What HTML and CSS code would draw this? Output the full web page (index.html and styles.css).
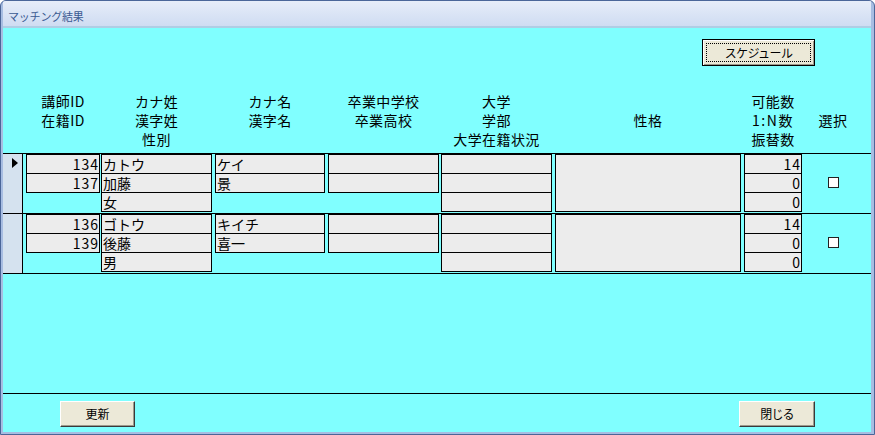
FILE: index.html
```html
<!DOCTYPE html>
<html lang="ja">
<head>
<meta charset="utf-8">
<title>マッチング結果</title>
<link rel="stylesheet" href="styles.css">
</head>
<body>
<div class="window">
  <div class="titlebar">マッチング結果</div>
  <div class="client">
    <div class="toolbar">
      <button class="btn btn-default btn-schedule">スケジュール<span class="focus"></span></button>
    </div>

    <div class="cols header">
      <div class="sel-space"></div>
      <div class="c c-id"><div>講師ID</div><div>在籍ID</div></div>
      <div class="c c-kana"><div>カナ姓</div><div>漢字姓</div><div>性別</div></div>
      <div class="c c-name"><div>カナ名</div><div>漢字名</div></div>
      <div class="c c-school"><div>卒業中学校</div><div>卒業高校</div></div>
      <div class="c c-univ"><div>大学</div><div>学部</div><div>大学在籍状況</div></div>
      <div class="c c-char mid"><div>性格</div></div>
      <div class="c c-num"><div>可能数</div><div class="wide">1:N数</div><div>振替数</div></div>
      <div class="c c-check mid"><div>選択</div></div>
    </div>

    <div class="records">
      <div class="cols record">
        <div class="sel"><span class="arrow"></span></div>
        <div class="c c-id"><div class="box num">134</div><div class="box num">137</div></div>
        <div class="c c-kana"><div class="box">カトウ</div><div class="box">加藤</div><div class="box">女</div></div>
        <div class="c c-name"><div class="box">ケイ</div><div class="box">景</div></div>
        <div class="c c-school"><div class="box"></div><div class="box"></div></div>
        <div class="c c-univ"><div class="box"></div><div class="box"></div><div class="box"></div></div>
        <div class="c c-char"><div class="box tall"></div></div>
        <div class="c c-num"><div class="box num">14</div><div class="box num">0</div><div class="box num">0</div></div>
        <div class="c c-check"><span class="checkbox"></span></div>
      </div>
      <div class="cols record">
        <div class="sel"></div>
        <div class="c c-id"><div class="box num">136</div><div class="box num">139</div></div>
        <div class="c c-kana"><div class="box">ゴトウ</div><div class="box">後藤</div><div class="box">男</div></div>
        <div class="c c-name"><div class="box">キイチ</div><div class="box">喜一</div></div>
        <div class="c c-school"><div class="box"></div><div class="box"></div></div>
        <div class="c c-univ"><div class="box"></div><div class="box"></div><div class="box"></div></div>
        <div class="c c-char"><div class="box tall"></div></div>
        <div class="c c-num"><div class="box num">14</div><div class="box num">0</div><div class="box num">0</div></div>
        <div class="c c-check"><span class="checkbox"></span></div>
      </div>
    </div>

    <div class="footer">
      <button class="btn btn-update">更新</button>
      <button class="btn btn-close">閉じる</button>
    </div>
  </div>
</div>
</body>
</html>
```

FILE: styles.css
```css
* { box-sizing: border-box; }

body {
  margin: 0;
  font-family: "Noto Sans CJK JP", "Noto Sans", sans-serif;
  color: #000;
}

.window {
  width: 875px;
  height: 435px;
  border: 1px solid #4a6699;
  border-radius: 6px 6px 0 0;
  background: #a7bde2;
  padding: 0 3px 2px 2px;
  display: flex;
  flex-direction: column;
  overflow: hidden;
}

.titlebar {
  height: 27px;
  padding: 5px 0 0 5px;
  font-size: 11px;
  line-height: 20px;
  letter-spacing: -0.2px;
  color: #3a5a92;
  background: linear-gradient(#e6edf9, #cfdcf2);
  border-bottom: 2px solid #afcde4;
}

.client {
  flex: 1;
  background: #80ffff;
  display: flex;
  flex-direction: column;
}

.toolbar {
  display: flex;
  justify-content: flex-end;
  padding: 11px 56px 0 0;
}

.btn {
  font-family: "Noto Sans CJK JP", "Noto Sans", sans-serif;
  font-size: 12px;
  line-height: 14px;
  color: #000;
  background: #ece9d8;
  border: 1px solid;
  border-color: #ffffff #3a3a3a #3a3a3a #ffffff;
  box-shadow: inset -1px -1px 0 #9d9a8c;
  padding: 0;
  height: 26px;
}

.btn-default {
  position: relative;
  border: 1px solid #000;
  box-shadow: inset 1px 1px 0 #ffffff, inset -1px -1px 0 #9d9a8c;
  letter-spacing: -0.6px;
}

.btn-schedule { width: 113px; height: 27px; }
.btn-update { width: 75px; }
.btn-close { width: 76px; letter-spacing: -0.8px; }

.focus {
  position: absolute;
  left: 3px;
  top: 3px;
  right: 3px;
  bottom: 3px;
  border: 1px dotted #000;
}

.cols { display: flex; }

.header {
  margin-top: 26px;
  height: 57px;
}

.header .c {
  display: flex;
  flex-direction: column;
  align-items: center;
  font-size: 14px;
  line-height: 19px;
  letter-spacing: 0.4px;
  white-space: nowrap;
}

.header .mid { justify-content: center; }
.header .wide { letter-spacing: 1.6px; }

.sel-space { width: 20px; flex: none; }

.c { flex: none; }
.c-id { margin-left: 3px; width: 74px; }
.c-kana { margin-left: 1px; width: 111px; }
.c-name { margin-left: 3px; width: 110px; }
.c-school { margin-left: 3px; width: 111px; }
.c-univ { margin-left: 2px; width: 111px; }
.c-char { margin-left: 3px; width: 186px; }
.c-num { margin-left: 3px; width: 58px; }
.c-check { width: 62px; }

.records {
  margin-top: 4px;
  border-top: 1px solid #000;
}

.record {
  height: 60px;
  border-bottom: 1px solid #000;
}

.sel {
  width: 20px;
  flex: none;
  border-right: 1px solid #000;
  background: #d5e2ef;
  padding: 4px 0 0 9px;
}

.arrow {
  display: block;
  width: 0;
  height: 0;
  border-left: 6px solid #000;
  border-top: 5px solid transparent;
  border-bottom: 5px solid transparent;
}

.box {
  height: 20px;
  border: 1px solid #000;
  background: #ececec;
  font-size: 14px;
  line-height: 18px;
  padding: 0 1px;
  white-space: nowrap;
  overflow: hidden;
}

.box + .box { margin-top: -1px; }
.box.tall { height: 58px; }
.num { text-align: right; letter-spacing: 1px; padding-right: 0; }

.record .c-check {
  display: flex;
  justify-content: center;
  align-items: center;
}

.checkbox {
  display: block;
  width: 11px;
  height: 11px;
  border: 1px solid #222;
  background: #fff;
  margin-top: -3px;
}

.footer {
  margin-top: auto;
  border-top: 1px solid #000;
  padding: 7px 56px 5px 57px;
  display: flex;
  justify-content: space-between;
}
```
